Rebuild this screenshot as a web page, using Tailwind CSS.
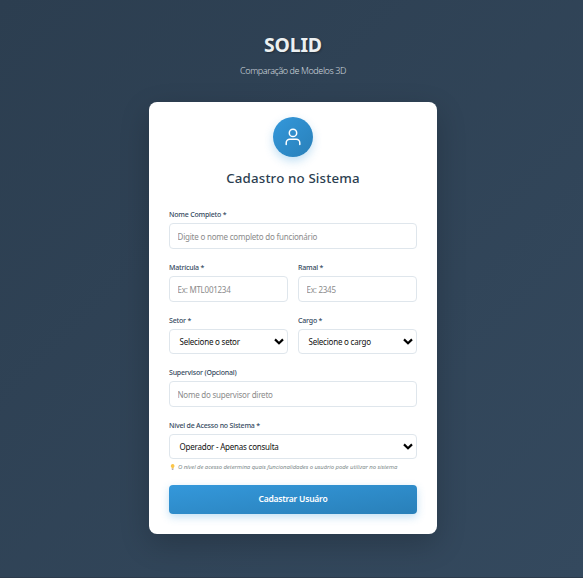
<!DOCTYPE html>
<html lang="pt-BR">
<head>
<meta charset="utf-8">
<title>SOLID - Cadastro no Sistema</title>
<script src="https://cdn.jsdelivr.net/npm/@tailwindcss/browser@4"></script>
</head>
<body class="font-['Noto_Sans','Open_Sans',sans-serif]">
<div class="h-[578px] w-[583px] overflow-hidden border-b border-[#2c3b4c] bg-[linear-gradient(135deg,#2c3e50_0%,#34495e_100%)] pl-[3px]">
  <header class="flex h-[102px] flex-col items-center pt-[33px]">
    <h1 class="text-[19.4px] leading-[24px] font-bold tracking-[-0.15px] text-[#ecf0f1] [text-shadow:1px_1px_2px_rgba(0,0,0,0.3)]">SOLID</h1>
    <p class="mt-[7px] text-[9px] leading-[14px] font-light tracking-[-0.42px] text-[#d0d9df]">Comparação de Modelos 3D</p>
  </header>
  <main class="mx-auto flex h-[432px] w-[288px] flex-col rounded-lg bg-white px-5 pt-[15px] shadow-[0_10px_30px_rgba(0,0,0,0.2)]">
    <div class="mx-auto flex size-10 shrink-0 items-center justify-center rounded-full bg-linear-to-br from-[#3498db] to-[#2980b9] shadow-[0_4px_10px_rgba(52,152,219,0.3)]">
      <svg class="size-5" viewBox="0 0 20 20" fill="none" stroke="#fff" stroke-width="1.5" stroke-linecap="round"><circle cx="10" cy="5.9" r="3.7"/><path d="M3.2 17.6v-1.7a3.6 3.6 0 0 1 3.6-3.6h6.4a3.6 3.6 0 0 1 3.6 3.6v1.7"/></svg>
    </div>
    <h2 class="mt-[11px] text-center text-[13.3px] leading-5 font-medium tracking-[0.15px] text-[#2c3e50]">Cadastro no Sistema</h2>
    <form class="mt-[22px] flex flex-col">
      <div>
        <label class="mb-1 block text-[7px] leading-[9px] font-medium tracking-[-0.2px] text-[#34495e]">Nome Completo *</label>
        <input class="block h-[26px] w-full rounded border border-[#dfe6ec] px-[7.5px] text-[8px] tracking-[-0.21px] placeholder:text-[#8b8b8b]" placeholder="Digite o nome completo do funcionário">
      </div>
      <div class="mt-[14px] grid grid-cols-2 gap-[10px]">
        <div>
          <label class="mb-1 block text-[7px] leading-[9px] font-medium tracking-[-0.2px] text-[#34495e]">Matrícula *</label>
          <input class="block h-[26px] w-full rounded border border-[#dfe6ec] px-[7.5px] text-[8px] tracking-[-0.25px] placeholder:text-[#8b8b8b]" placeholder="Ex: MTL001234">
        </div>
        <div>
          <label class="mb-1 block text-[7px] leading-[9px] font-medium tracking-[-0.2px] text-[#34495e]">Ramal *</label>
          <input class="block h-[26px] w-full rounded border border-[#dfe6ec] px-[7.5px] text-[8px] tracking-[-0.25px] placeholder:text-[#8b8b8b]" placeholder="Ex: 2345">
        </div>
      </div>
      <div class="mt-[14px] grid grid-cols-2 gap-[10px]">
        <div>
          <label class="mb-1 block text-[7px] leading-[9px] font-medium tracking-[-0.2px] text-[#34495e]">Setor *</label>
          <div class="flex h-[25px] items-center justify-between rounded border border-[#dfe6ec] pr-[3px] pl-[9.5px] text-[8px] tracking-[-0.22px] text-[#111]"><span>Selecione o setor</span><svg class="mb-px h-[7px] w-[10px]" viewBox="0 0 10 7" fill="none" stroke="#000" stroke-width="2.2"><path d="M1 1.4 5 5.2 9 1.4"/></svg></div>
        </div>
        <div>
          <label class="mb-1 block text-[7px] leading-[9px] font-medium tracking-[-0.2px] text-[#34495e]">Cargo *</label>
          <div class="flex h-[25px] items-center justify-between rounded border border-[#dfe6ec] pr-[3px] pl-[9.5px] text-[8px] tracking-[-0.22px] text-[#111]"><span>Selecione o cargo</span><svg class="mb-px h-[7px] w-[10px]" viewBox="0 0 10 7" fill="none" stroke="#000" stroke-width="2.2"><path d="M1 1.4 5 5.2 9 1.4"/></svg></div>
        </div>
      </div>
      <div class="mt-[14px]">
        <label class="mb-1 block text-[7px] leading-[9px] font-medium tracking-[-0.2px] text-[#34495e]">Supervisor (Opcional)</label>
        <input class="block h-[26px] w-full rounded border border-[#dfe6ec] px-[7.5px] text-[8px] tracking-[-0.23px] placeholder:text-[#8b8b8b]" placeholder="Nome do supervisor direto">
      </div>
      <div class="mt-[14px]">
        <label class="mb-1 block text-[7px] leading-[9px] font-medium tracking-[-0.2px] text-[#34495e]">Nível de Acesso no Sistema *</label>
        <div class="flex h-[25px] items-center justify-between rounded border border-[#dfe6ec] pr-[3px] pl-[9.5px] text-[8px] tracking-[-0.22px] text-[#111]"><span>Operador - Apenas consulta</span><svg class="mb-px h-[7px] w-[10px]" viewBox="0 0 10 7" fill="none" stroke="#000" stroke-width="2.2"><path d="M1 1.4 5 5.2 9 1.4"/></svg></div>
        <p class="mt-1 flex h-2 items-center gap-[3px] pl-[1px] text-[6px] leading-[8px] tracking-[-0.09px] whitespace-nowrap text-[#7f8c8d] italic"><svg class="h-[6px] w-[5px] shrink-0" viewBox="0 0 5 6"><path d="M2.5 0a2 2 0 0 1 1.2 3.6V4.4H1.6V3.6A2 2 0 0 1 2.5 0z" fill="#fbc64a"/><path d="M1.8 4.4h1.6V6H1.8z" fill="#b4acb8"/></svg><span>O nível de acesso determina quais funcionalidades o usuário pode utilizar no sistema</span></p>
      </div>
      <button type="button" class="mt-[14px] h-[29px] rounded bg-linear-to-br from-[#3498db] to-[#2980b9] text-[8.5px] font-semibold tracking-[-0.22px] text-white shadow-[0_3px_8px_rgba(52,152,219,0.3)]">Cadastrar Usuáro</button>
    </form>
  </main>
</div>
</body>
</html>
